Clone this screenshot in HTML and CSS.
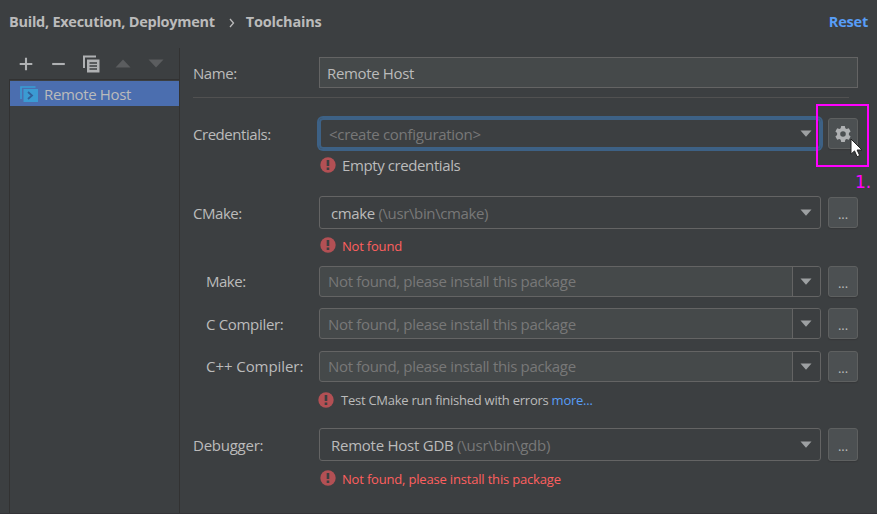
FILE: index.html
```html
<!DOCTYPE html>
<html lang="en">
<head>
<meta charset="utf-8">
<title>Toolchains</title>
<link rel="stylesheet" href="styles.css">
</head>
<body>
<svg class="defs" width="0" height="0">
  <symbol id="error" viewBox="0 0 16 16"><circle cx="8" cy="8" r="7.7" fill="#b35054"/><path d="M6.7 3h2.6v6H6.7zM6.7 10.6h2.6V13H6.7z" fill="#3c3f41"/></symbol>
  <symbol id="arrow" viewBox="0 0 12 7"><path d="M.5.5h11L6 6.8z" fill="#9da0a2"/></symbol>
</svg>
<header class="header">
  <span class="crumb crumb-first">Build, Execution, Deployment</span>
  <svg class="chevron" width="6" height="10" viewBox="0 0 6 10"><path d="M1 1l3.5 4L1 9" fill="none" stroke="#bbb" stroke-width="1.3"/></svg>
  <span class="crumb crumb-last">Toolchains</span>
  <a class="reset">Reset</a>
</header>
<main class="main">
  <aside class="sidebar">
    <div class="toolbar">
      <svg width="14" height="14" viewBox="0 0 14 14"><path d="M7 .7v12.6M.7 7h12.6" stroke="#afb1b3" stroke-width="2.1"/></svg>
      <svg width="13" height="14" viewBox="0 0 13 14"><path d="M.2 7h12.6" stroke="#afb1b3" stroke-width="2.1"/></svg>
      <svg width="17" height="18" viewBox="0 0 17 18"><path d="M1 13V1.5h12" fill="none" stroke="#afb1b3" stroke-width="2"/><path d="M4 4.5h12.5v13H4z" fill="#afb1b3"/><path d="M6.5 8h7.5M6.5 11h7.5M6.5 14h7.5" stroke="#3c3f41" stroke-width="1.3"/></svg>
      <svg width="16" height="9" viewBox="0 0 16 9"><path d="M.5 8.5h15L8 .5z" fill="#5b5d5f"/></svg>
      <svg width="16" height="9" viewBox="0 0 16 9"><path d="M.5.5h15L8 8.5z" fill="#5b5d5f"/></svg>
    </div>
    <div class="list">
      <div class="item">
        <svg width="18" height="16" viewBox="0 0 18 16"><path d="M1 13V1h14.5" fill="none" stroke="#389fd6" stroke-width="1.6"/><path d="M3.5 3H18v13H3.5z" fill="#3b9bd2"/><path d="M8 6l4 3.5L8 13" fill="none" stroke="#315f98" stroke-width="1.8"/></svg>
        <span class="t-item">Remote Host</span>
      </div>
    </div>
  </aside>
  <section class="form">
    <div class="row row-name">
      <label class="t-name">Name:</label>
      <div class="input"><span class="t-item">Remote Host</span></div>
    </div>
    <div class="divider"></div>
    <div class="row row-cred">
      <label class="t-cred">Credentials:</label>
      <div class="combo focused"><span class="muted t-create">&lt;create configuration&gt;</span><svg class="arrow"><use href="#arrow"/></svg></div>
      <button class="btn"><svg class="gear" width="16" height="16" viewBox="0 0 16 16"><path fill="#afb1b3" fill-rule="evenodd" d="M6.2 0h3.6l.5 2.2 1.3.8 2.2-.7 1.8 3.1-1.7 1.5v2.2l1.7 1.5-1.8 3.1-2.2-.7-1.3.8-.5 2.2H6.2l-.5-2.2-1.3-.8-2.2.7-1.8-3.1 1.7-1.5V6.9L.4 5.4l1.8-3.1 2.2.7 1.3-.8zM8 5.2a2.8 2.8 0 1 0 0 5.6 2.8 2.8 0 0 0 0-5.6z"/></svg></button>
    </div>
    <div class="message msg-cred"><svg class="error"><use href="#error"/></svg><span class="t-empty">Empty credentials</span></div>
    <div class="row row-cmake">
      <label class="t-cmake">CMake:</label>
      <div class="combo"><span class="t-cmakev">cmake <span class="muted">(\usr\bin\cmake)</span></span><svg class="arrow"><use href="#arrow"/></svg></div>
      <button class="btn">...</button>
    </div>
    <div class="message small bad msg-cmake"><svg class="error"><use href="#error"/></svg><span class="t-nf">Not found</span></div>
    <div class="row row-make">
      <label class="sub t-make">Make:</label>
      <div class="combo editable"><span class="muted t-missing">Not found, please install this package</span><span class="drop"><svg class="arrow"><use href="#arrow"/></svg></span></div>
      <button class="btn">...</button>
    </div>
    <div class="row row-c">
      <label class="sub t-c">C Compiler:</label>
      <div class="combo editable"><span class="muted t-missing">Not found, please install this package</span><span class="drop"><svg class="arrow"><use href="#arrow"/></svg></span></div>
      <button class="btn">...</button>
    </div>
    <div class="row row-cpp">
      <label class="sub t-cpp">C++ Compiler:</label>
      <div class="combo editable"><span class="muted t-missing">Not found, please install this package</span><span class="drop"><svg class="arrow"><use href="#arrow"/></svg></span></div>
      <button class="btn">...</button>
    </div>
    <div class="message small msg-test"><svg class="error"><use href="#error"/></svg><span class="t-test">Test CMake run finished with errors <a class="link">more...</a></span></div>
    <div class="row row-debug">
      <label class="t-debug">Debugger:</label>
      <div class="combo"><span class="t-gdb">Remote Host GDB <span class="muted">(\usr\bin\gdb)</span></span><svg class="arrow"><use href="#arrow"/></svg></div>
      <button class="btn">...</button>
    </div>
    <div class="message small bad msg-debug"><svg class="error"><use href="#error"/></svg><span class="t-nfp">Not found, please install this package</span></div>
  </section>
</main>
<div class="highlight"></div>
<div class="step">1.</div>
<svg class="cursor" width="13" height="20" viewBox="0 0 13 20"><path d="M1 1v15.2l3.5-3.3 2.6 5.8 2.6-1.2-2.6-5.5H12z" fill="#fff" stroke="#222" stroke-width="1"/></svg>
</body>
</html>
```
FILE: styles.css
```css
* { box-sizing: border-box; }
body {
  margin: 0;
  width: 877px;
  height: 514px;
  overflow: hidden;
  position: relative;
  display: flex;
  flex-direction: column;
  background: #3c3f41;
  border-bottom: 1px solid #343438;
  color: #bbb;
  font: 15px/20px "Open Sans", "Noto Sans", sans-serif;
  white-space: nowrap;
}
.defs { position: absolute; }
svg { display: block; flex: none; }
.header {
  height: 48px;
  padding: 12px 9px 16px;
  display: flex;
  align-items: center;
  font-weight: 700;
  font-size: 14.5px;
}
.crumb-first { letter-spacing: -.26px; }
.crumb-last { letter-spacing: -.2px; }
.chevron { margin: 1px 11px 0 14px; }
.reset { margin-left: auto; color: #589df6; letter-spacing: -.2px; }
.main { flex: 1; display: flex; }
.sidebar {
  width: 180px;
  padding-left: 9px;
  border-right: 1px solid #323232;
  display: flex;
  flex-direction: column;
}
.toolbar {
  height: 31px;
  padding: 0 15px 0 10px;
  display: flex;
  align-items: center;
  gap: 19px;
}
.toolbar svg:nth-child(2) { margin-right: -1px; }
.toolbar svg:nth-child(3) { margin-right: -4px; }
.toolbar svg:nth-child(4) { margin-right: -2px; }
.list { flex: 1; border-top: 1px solid #323232; border-left: 1px solid #323232; padding-top: 1px; }
.item {
  height: 25px;
  padding-left: 10px;
  display: flex;
  align-items: center;
  gap: 6px;
  background: #4b6eaf;
}
.form { flex: 1; padding: 9px 19px 0 13px; }
.row { display: flex; align-items: stretch; height: 31px; }
label { width: 126px; flex: none; align-self: center; }
.sub { padding-left: 13px; }
.input {
  flex: 1;
  padding: 1px 0 0 7px;
  display: flex;
  align-items: center;
  background: #45494a;
  border: 1px solid #646464;
}
.divider { height: 1px; margin: 9px 9px 20px 0; background: #515151; }
.combo {
  width: 502px;
  padding: 0 8px 0 11px;
  display: flex;
  align-items: center;
  justify-content: space-between;
  border: 1px solid #646464;
  border-radius: 3px;
}
.arrow { width: 12px; height: 7px; }
.focused { box-shadow: 0 0 0 2px #3d6185; border: 2px solid #3d6185; border-radius: 4px; padding-left: 8px; padding-right: 7px; }
.editable { padding: 0 0 0 8px; background: #45494a; overflow: hidden; }
.row-make label, .row-cpp label, .row-make .t-missing, .row-cpp .t-missing { margin-top: -2px; }
.drop {
  width: 28px;
  height: 100%;
  padding-right: 1px;
  display: flex;
  align-items: center;
  justify-content: center;
  border-left: 1px solid #646464;
  background: #3c3f41;
}
.btn {
  width: 30px;
  margin: 0 0 0 7px;
  padding: 3px 0 0;
  display: flex;
  align-items: center;
  justify-content: center;
  background: #4c5052;
  border: 1px solid #5e6060;
  border-radius: 3px;
  box-shadow: 0 1px 1px #36383a;
  color: #bbb;
  font: 13px/20px "Open Sans", sans-serif;
}
.gear { margin-top: -2px; }
.message { display: flex; align-items: center; height: 20px; padding-left: 127px; gap: 6px; }
.error { width: 16px; height: 16px; }
.small { font-size: 13px; }
.bad { color: #ff5f5f; }
.bad .error { margin-top: -2px; }
.muted { color: #787878; }
.link { color: #589df6; }
.msg-cred { margin-top: 6px; }
.row-cmake { margin-top: 21px; height: 33px; }
.row-cmake .btn { margin-bottom: 1px; margin-top: 1px; }
.msg-cmake { margin-top: 7px; }
.row-make { margin-top: 10px; }
.row-c { margin-top: 11px; }
.row-cpp { margin-top: 12px; }
.msg-test { margin-top: 8px; padding-left: 125px; gap: 7px; }
.row-debug { margin-top: 18px; height: 33px; }
.msg-debug { margin-top: 8px; }
.t-item { letter-spacing: -.35px; }
.t-name, .t-cmake { letter-spacing: -.45px; }
.t-cred { letter-spacing: -.46px; }
.t-make { letter-spacing: -.5px; }
.t-c { letter-spacing: -.32px; }
.t-cpp { letter-spacing: -.06px; }
.t-debug { letter-spacing: -.25px; }
.t-create { letter-spacing: -.3px; }
.t-empty { letter-spacing: -.4px; }
.t-cmakev { letter-spacing: -.37px; }
.t-missing { letter-spacing: -.33px; }
.t-gdb { letter-spacing: -.25px; }
.t-nf { letter-spacing: -.2px; }
.t-test { letter-spacing: -.25px; }
.t-nfp { letter-spacing: -.18px; }
.highlight { position: absolute; left: 816px; top: 104px; width: 53px; height: 63px; border: 2px solid #f0f; }
.step { position: absolute; left: 855px; top: 172px; color: #f0f; font: 17px/20px "DejaVu Sans", sans-serif; }
.cursor { position: absolute; left: 850px; top: 138px; }
```
